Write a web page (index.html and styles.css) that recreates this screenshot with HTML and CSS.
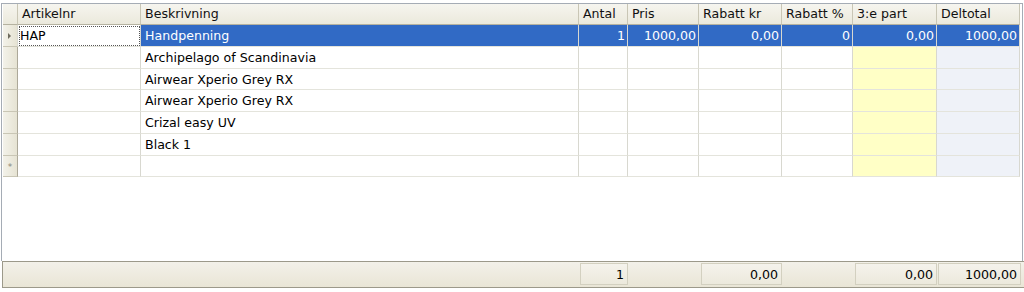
FILE: index.html
```html
<!DOCTYPE html>
<html lang="sv">
<head>
    <meta charset="UTF-8">
    <title>Orderrader</title>
    <link rel="stylesheet" href="styles.css">
</head>
<body>
    <div class="grid-frame">
        <!-- Column headers -->
        <div class="row header-row">
            <div class="cell row-head"></div>
            <div class="cell">Artikelnr</div>
            <div class="cell">Beskrivning</div>
            <div class="cell">Antal</div>
            <div class="cell">Pris</div>
            <div class="cell">Rabatt kr</div>
            <div class="cell">Rabatt %</div>
            <div class="cell">3:e part</div>
            <div class="cell">Deltotal</div>
        </div>

        <!-- Selected row -->
        <div class="row selected">
            <div class="cell row-head"><span class="arrow"></span></div>
            <div class="cell focused">HAP</div>
            <div class="cell">Handpenning</div>
            <div class="cell num">1</div>
            <div class="cell num">1000,00</div>
            <div class="cell num">0,00</div>
            <div class="cell num">0</div>
            <div class="cell num">0,00</div>
            <div class="cell num">1000,00</div>
        </div>

        <div class="row">
            <div class="cell row-head"></div>
            <div class="cell"></div>
            <div class="cell">Archipelago of Scandinavia</div>
            <div class="cell"></div>
            <div class="cell"></div>
            <div class="cell"></div>
            <div class="cell"></div>
            <div class="cell third"></div>
            <div class="cell total"></div>
        </div>

        <div class="row">
            <div class="cell row-head"></div>
            <div class="cell"></div>
            <div class="cell">Airwear Xperio Grey RX</div>
            <div class="cell"></div>
            <div class="cell"></div>
            <div class="cell"></div>
            <div class="cell"></div>
            <div class="cell third"></div>
            <div class="cell total"></div>
        </div>

        <div class="row">
            <div class="cell row-head"></div>
            <div class="cell"></div>
            <div class="cell">Airwear Xperio Grey RX</div>
            <div class="cell"></div>
            <div class="cell"></div>
            <div class="cell"></div>
            <div class="cell"></div>
            <div class="cell third"></div>
            <div class="cell total"></div>
        </div>

        <div class="row">
            <div class="cell row-head"></div>
            <div class="cell"></div>
            <div class="cell">Crizal easy UV</div>
            <div class="cell"></div>
            <div class="cell"></div>
            <div class="cell"></div>
            <div class="cell"></div>
            <div class="cell third"></div>
            <div class="cell total"></div>
        </div>

        <div class="row">
            <div class="cell row-head"></div>
            <div class="cell"></div>
            <div class="cell">Black 1</div>
            <div class="cell"></div>
            <div class="cell"></div>
            <div class="cell"></div>
            <div class="cell"></div>
            <div class="cell third"></div>
            <div class="cell total"></div>
        </div>

        <!-- New row placeholder -->
        <div class="row">
            <div class="cell row-head star">*</div>
            <div class="cell"></div>
            <div class="cell"></div>
            <div class="cell"></div>
            <div class="cell"></div>
            <div class="cell"></div>
            <div class="cell"></div>
            <div class="cell third"></div>
            <div class="cell total"></div>
        </div>
    </div>

    <!-- Sum bar -->
    <div class="sum-bar">
        <div class="sum-box sum-antal">1</div>
        <div class="sum-box sum-rabatt">0,00</div>
        <div class="sum-box sum-third">0,00</div>
        <div class="sum-box sum-total">1000,00</div>
    </div>
</body>
</html>
```

FILE: styles.css
```css
body {
    margin: 0;
    font-family: "DejaVu Sans", Verdana, sans-serif;
    font-size: 12.6px;
    color: #000;
    background-color: #fff;
    width: 1024px;
    height: 292px;
    overflow: hidden;
}

.grid-frame {
    margin: 3px 1px 0 1px;
    height: 258px;
    border: 1px solid #a5acb5;
    border-bottom: none;
    background-color: #fff;
    box-sizing: border-box;
    padding-left: 1px;
}

.row {
    display: grid;
    grid-template-columns: 15px 123px 438px 49px 71px 83px 71px 84px 83px;
    height: 21.75px;
}

.cell {
    border-right: 1px solid #d8d8d0;
    border-bottom: 1px solid #e4e4dc;
    padding: 0 4px;
    line-height: 21px;
    white-space: nowrap;
    overflow: hidden;
    box-sizing: border-box;
}

.num {
    text-align: right;
    padding-right: 2px;
}

.header-row {
    height: 21px;
}

.header-row .cell {
    background: linear-gradient(#f6f5ef, #ebe9dc);
    border-right: 1px solid #c9c6b5;
    border-bottom: 1px solid #b5b2a0;
    line-height: 20px;
    color: #111;
}

.row-head {
    background: linear-gradient(90deg, #f3f2ea, #e6e3d3);
    border-right: 1px solid #aca899;
    border-bottom: 1px solid #c9c6b5;
    padding: 0;
    position: relative;
}

.arrow {
    position: absolute;
    left: 5px;
    top: 8px;
    width: 0;
    height: 0;
    border-top: 3px solid transparent;
    border-bottom: 3px solid transparent;
    border-left: 3px solid #6e6b5e;
}

.star {
    text-align: center;
    color: #8a8778;
    font-size: 9px;
    line-height: 22px;
}

.selected .cell {
    background-color: #316ac5;
    color: #fff;
    border-right-color: #d8d8d0;
}

.selected .row-head {
    background: linear-gradient(90deg, #f3f2ea, #e6e3d3);
    color: #000;
}

.selected .focused {
    background-color: #fff;
    color: #000;
    padding-left: 2px;
    outline: 1px dotted #555;
    outline-offset: -2px;
}

.third {
    background-color: #ffffc6;
}

.total {
    background-color: #eff2f8;
}

.sum-bar {
    position: relative;
    margin: 0 0 0 2px;
    height: 27px;
    border: 1px solid #9c998a;
    border-right: none;
    background: linear-gradient(#f3f1e9, #e9e5d6);
    box-sizing: border-box;
}

.sum-box {
    position: absolute;
    top: 1px;
    height: 22px;
    border: 1px solid #d3d0c0;
    background: linear-gradient(#f5f3ec, #ece9dc);
    text-align: right;
    padding-right: 3px;
    line-height: 21px;
    box-sizing: border-box;
}

.sum-antal {
    left: 577px;
    width: 48px;
}

.sum-rabatt {
    left: 698px;
    width: 81px;
}

.sum-third {
    left: 852px;
    width: 82px;
}

.sum-total {
    left: 935px;
    width: 83px;
}
```
